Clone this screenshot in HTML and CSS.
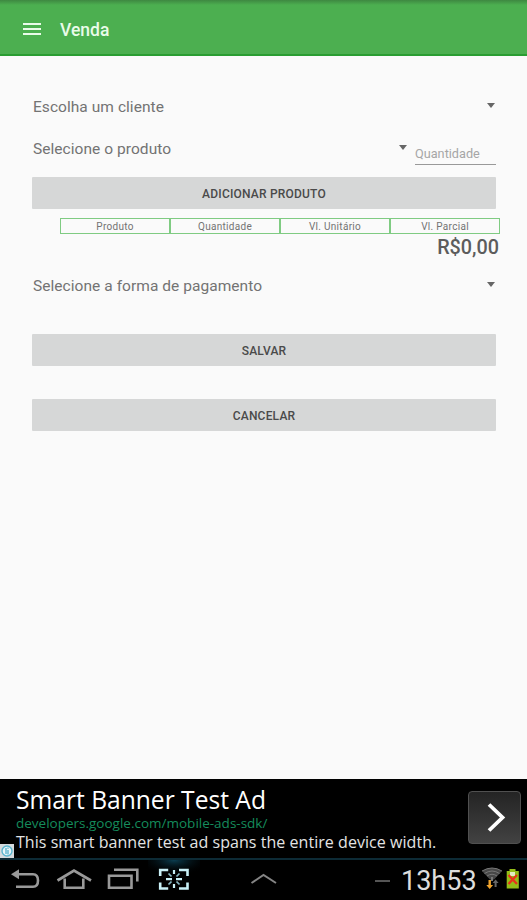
FILE: index.html
```html
<!DOCTYPE html>
<html lang="pt-BR">
<head>
  <meta charset="UTF-8" />
  <meta name="viewport" content="width=device-width, initial-scale=1" />
  <title>Venda</title>
  <link rel="stylesheet" href="styles.css">
</head>
<body>
  <header class="toolbar">
    <svg class="menu-icon" width="18" height="12" viewBox="0 0 18 12">
      <path d="M0 1h18M0 6h18M0 11h18" stroke="#e9fbe9" stroke-width="1.8" />
    </svg>
    <h1 class="title">Venda</h1>
  </header>

  <main class="form">
    <div class="spinner cliente">
      <span class="label">Escolha um cliente</span>
      <span class="arrow"></span>
    </div>
    <div class="row">
      <div class="spinner produto">
        <span class="label">Selecione o produto</span>
        <span class="arrow"></span>
      </div>
      <div class="quantidade"><span class="hint">Quantidade</span></div>
    </div>
    <button class="btn btn-adicionar">Adicionar produto</button>
    <div class="tabela">
      <span class="celula">Produto</span>
      <span class="celula">Quantidade</span>
      <span class="celula">Vl. Unitário</span>
      <span class="celula">Vl. Parcial</span>
    </div>
    <div class="total"><span class="valor">R$0,00</span></div>
    <div class="spinner pagamento">
      <span class="label">Selecione a forma de pagamento</span>
      <span class="arrow"></span>
    </div>
    <button class="btn btn-salvar">Salvar</button>
    <button class="btn btn-cancelar">Cancelar</button>
  </main>

  <section class="ad">
    <div class="ad-text">
      <div class="ad-title"><span>Smart Banner Test Ad</span></div>
      <div class="ad-url"><span>developers.google.com/mobile-ads-sdk/</span></div>
      <div class="ad-desc"><span>This smart banner test ad spans the entire device width.</span></div>
    </div>
    <div class="ad-go">
      <svg width="52" height="52" viewBox="0 0 52 52">
        <path d="M20 12.5L33.5 25.5L20 38.5" fill="none" stroke="#fff" stroke-width="3.8" />
      </svg>
    </div>
    <svg class="ad-info" width="14" height="14" viewBox="0 0 14 14">
      <path d="M0 0h14v14H0z" fill="#d5dadd" />
      <circle cx="7" cy="7" r="5" fill="#e8f5f9" stroke="#58b4ce" stroke-width="1.4" />
      <path d="M6 4v6M8 3.5v1.2M8 6v4.5" stroke="#46aac7" stroke-width="1.2" />
    </svg>
  </section>

  <footer class="navbar">
    <svg class="nav-icon" width="250" height="40" viewBox="0 0 250 40">
      <defs>
        <radialGradient id="glow" cx="50%" cy="0%" r="70%">
          <stop offset="0" stop-color="#0b3f52" />
          <stop offset="1" stop-color="#000" stop-opacity="0" />
        </radialGradient>
      </defs>
      <path d="M148 0h52v22h-52z" fill="url(#glow)" />
      <g fill="none" stroke="#999" stroke-width="2.6">
        <!-- voltar -->
        <path d="M17 14.3H33Q38 14.3 38 20.5Q38 26.8 33 26.8H16" />
        <path d="M11 14.3l8-5v10z" fill="#999" stroke="none" />
        <!-- início -->
        <path d="M57.5 20.5L74 10.5L91 20.5" stroke-width="2.7" />
        <path d="M64.7 18.5V27.7H83.3V18.5" />
        <!-- recentes -->
        <path d="M109 15.7h22.5v12H109z" />
        <path d="M114 9.7h23.3V21.5" />
      </g>
      <!-- captura de tela -->
      <g fill="none" stroke="#c9f0f6" stroke-width="2.6">
        <path d="M160.2 16V10h8M179 10h8.5v6M160.2 22.5V28.5h8M179 28.500h8.5v-6" />
        <path d="M166 19.2h6M176 19.2h6M174 10v4M174 24v4" stroke-width="2.2" />
        <path d="M168.5 13.5l3 3M179.5 13.5l-3 3M168.5 24.5l3-3M179.5 24.5l-3-3" stroke="#88b8c3" stroke-width="1.7" />
      </g>
    </svg>
    <svg class="nav-up" width="28" height="40" viewBox="0 0 28 40">
      <path d="M1.5 23L13.5 15L26 23" fill="none" stroke="#858585" stroke-width="2" />
    </svg>
    <div class="status">
      <span class="dash"></span>
      <span class="clock">13h53</span>
      <svg class="status-icons" width="39" height="40" viewBox="0 0 39 40">
        <path d="M0 11Q10 5 20 11L12 19.5H8z" fill="#484848" />
        <path d="M0 11Q10 5 20 11M2.5 13.5Q10 8.5 17.5 13.5M5 16Q10 12.5 15 16" fill="none" stroke="#777" />
        <path d="M9 17h2v4h-2z" fill="#777" />
        <path d="M6.5 20h2.4v5h2.2l-3.4 4-3.4-4h2.2z" fill="#f0a32c" />
        <path d="M12.600 27v-4h-2l3-3.5 3 3.5h-2v4z" fill="#666" />
        <path d="M27.5 9h6v2h3.300v17.5H24.7V11h2.800z" fill="#94bd18" />
        <path d="M28 12h5v4h-5z" fill="#e4edc3" />
        <path d="M26.5 15l8.5 9M35 15l-8.5 9" stroke="#e8321c" stroke-width="2.3" />
      </svg>
    </div>
  </footer>
</body>
</html>
```

FILE: styles.css
```css
* {
  box-sizing: border-box;
}

body {
  margin: 0;
  width: 527px;
  height: 900px;
  display: flex;
  flex-direction: column;
  overflow: hidden;
  background: #fafafa;
  font-family: Roboto, "Liberation Sans", sans-serif;
  color: #737373;
}

.toolbar {
  height: 56px;
  flex: none;
  display: flex;
  align-items: center;
  padding: 4px 23px 0;
  background: linear-gradient(#3e8841, #4caf50 5px);
  border-bottom: 2px solid #2a9d32;
}

.title {
  margin: 0 0 0 19px;
  padding-top: 1px;
  font-size: 17.5px;
  font-weight: 500;
  line-height: 24px;
  color: #e9fbe9;
}

.form {
  flex: 1;
  display: flex;
  flex-direction: column;
  padding: 39px 31px 0 32px;
}

.spinner {
  height: 24px;
  display: flex;
  align-items: center;
  justify-content: space-between;
  padding: 0 1px;
}

.label {
  font-size: 15.5px;
  line-height: 24px;
  white-space: nowrap;
  letter-spacing: 0.05px;
}

.arrow {
  border: 4.5px solid transparent;
  border-top: 5px solid #666;
  border-bottom: 0;
  margin-bottom: 3px;
}

.row {
  display: flex;
  height: 36px;
  margin-top: 18px;
}

.produto {
  width: 376px;
}

.quantidade {
  width: 81px;
  height: 28px;
  margin-left: 7px;
  padding-top: 8px;
  border-bottom: 1px solid #999;
  color: #a6a6a6;
  font-size: 12.7px;
  line-height: 18px;
}

.btn {
  flex: none;
  height: 32px;
  padding: 1px 0 0;
  border: none;
  border-radius: 1px;
  background: #d6d7d7;
  color: #4a4a4a;
  font-family: inherit;
  font-size: 12px;
  font-weight: 500;
  text-transform: uppercase;
  letter-spacing: 0.2px;
}

.btn-adicionar {
  margin-top: 4px;
}

.tabela {
  display: grid;
  grid-template-columns: 110px 110px 110px 1fr;
  height: 16px;
  margin: 9px -4px 0 28px;
  border: 1px solid #7fcb82;
}

.celula {
  padding-top: 1px;
  border-right: 2px solid #7fcb82;
  font-size: 10px;
  line-height: 13px;
  text-align: center;
  letter-spacing: 0.3px;
}

.celula:last-child {
  border-right: none;
}

.total {
  height: 28px;
  margin-right: -3px;
  text-align: right;
  font-size: 19.8px;
  font-weight: 500;
  line-height: 28px;
  color: #5c5c5c;
}

.pagamento {
  margin-top: 12px;
}

.btn-salvar {
  margin-top: 36px;
}

.btn-cancelar {
  margin-top: 33px;
}

.ad {
  position: relative;
  flex: none;
  height: 79px;
  display: flex;
  justify-content: space-between;
  padding: 7px 6px 0 16px;
  background: #000;
  font-family: "Open Sans", "Noto Sans", sans-serif;
  white-space: nowrap;
}

.ad-title {
  font-size: 24.6px;
  line-height: 28px;
  color: #fff;
}

.ad-url {
  padding-top: 1px;
  font-size: 13.5px;
  line-height: 17px;
  color: #158c5c;
}

.ad-desc {
  font-size: 16px;
  line-height: 20px;
  letter-spacing: 0.05px;
  color: #e4e4e4;
}

.ad-go {
  width: 53px;
  height: 53px;
  margin-top: 5px;
  border: 1px solid #505050;
  border-radius: 4px;
  background: linear-gradient(#242424, #424242);
}

.ad-info {
  position: absolute;
  left: 0;
  bottom: 0;
}

.navbar {
  flex: none;
  height: 42px;
  display: flex;
  border-top: 2px solid #0d2b36;
  background: #000;
}

.nav-icon {
  flex: none;
}

.nav-icon,
.nav-up,
.status-icons {
  display: block;
}

.status {
  flex: 1;
  display: flex;
  justify-content: flex-end;
  align-items: center;
  padding-right: 6px;
}

.dash {
  width: 15px;
  height: 2px;
  margin: 1px 11px 0 0;
  background: #555;
}

.clock {
  width: 75px;
  margin-right: 6px;
  padding-top: 2px;
  font-size: 27px;
  line-height: 38px;
  color: #ddd;
}
```
